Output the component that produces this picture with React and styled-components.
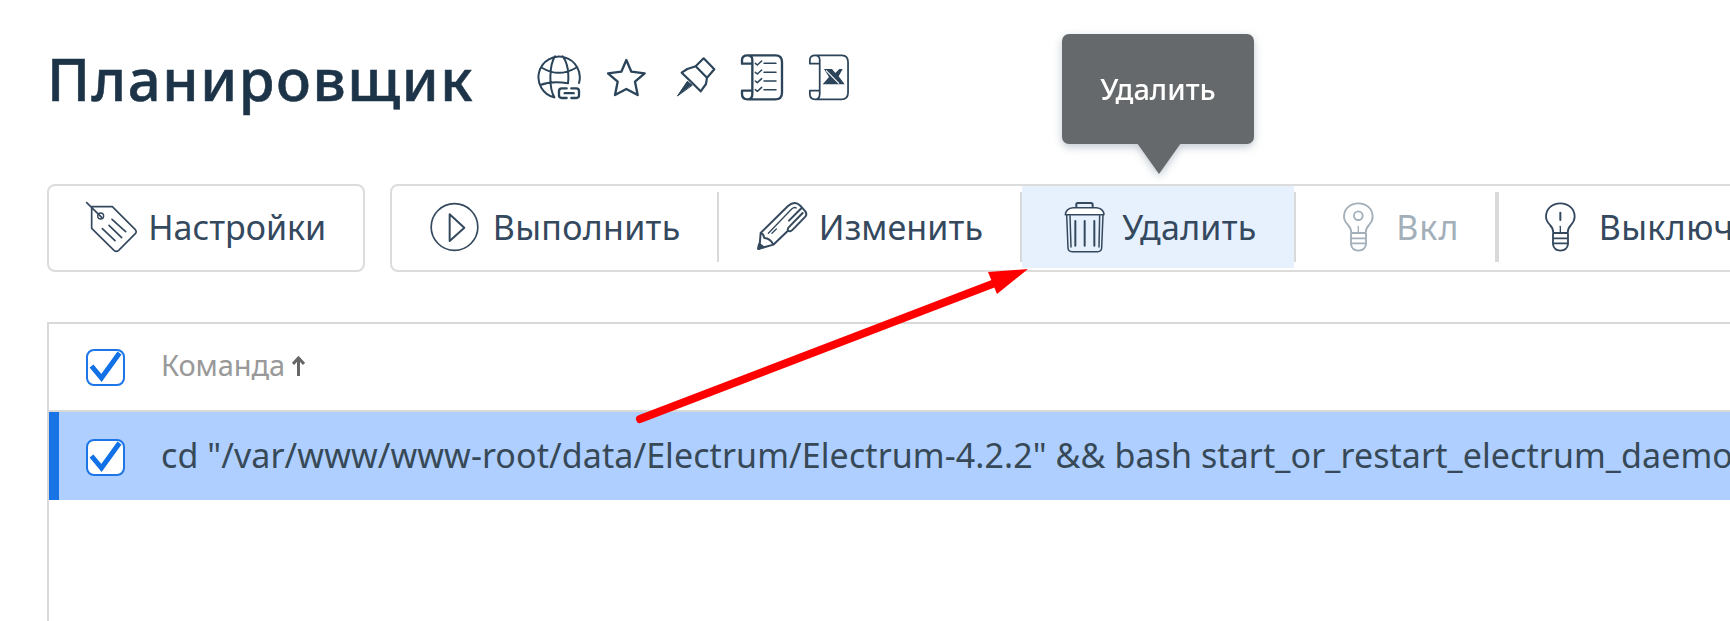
import React from "react";
import styled, { createGlobalStyle } from "styled-components";

const GlobalStyle = createGlobalStyle`
  * { box-sizing: border-box; }
  html, body { margin: 0; padding: 0; overflow: hidden; background: #fff; }
  body { font-family: "Noto Sans", "Open Sans", sans-serif; color: #34495e; }
  svg { display: block; flex: none; }
`;

const Page = styled.main`
  position: relative;
  display: flex;
  flex-direction: column;
  width: 1730px;
  height: 621px;
  padding-left: 47px;
  overflow: hidden;
  background: #fff;
`;

const Header = styled.header`
  display: flex;
  flex: none;
  align-items: flex-start;
  height: 184px;
  padding-top: 54px;
`;

const Title = styled.h1`
  width: 490.3px;
  margin: -15px 0 0;
  font-size: 58px;
  line-height: 80px;
  font-weight: 500;
  letter-spacing: 1.55px;
  -webkit-text-stroke: 0.6px #1d3448;
  white-space: nowrap;
  color: #1d3448;
`;

const HeaderIcons = styled.nav`
  display: grid;
  grid-template-columns: 69.4px 69.3px 64px 68px 42px;
  color: #2b4459;
`;

const Toolbar = styled.div`
  display: flex;
  gap: 25px;
  height: 88px;
  flex: none;
`;

const ButtonGroup = styled.div`
  display: flex;
  flex: none;
  align-items: flex-start;
  width: ${(p) => p.$width}px;
  height: 88px;
  border: 2px solid #dcdcdc;
  border-radius: 8px;
`;

const Button = styled.button`
  display: flex;
  flex: none;
  align-items: center;
  gap: ${(p) => p.$gap}px;
  width: ${(p) => p.$width}px;
  height: 82px;
  padding: 0 0 0 ${(p) => p.$pad}px;
  border: 0;
  background: ${(p) => (p.$active ? "#e7f1fe" : "transparent")};
  color: ${(p) => (p.$disabled ? "#a3afb9" : "#34495e")};
`;

const Label = styled.span`
  font: 400 34px/44px "Noto Sans", "Open Sans", sans-serif;
  letter-spacing: ${(p) => p.$track || 0}px;
  white-space: nowrap;
`;

const Separator = styled.span`
  flex: none;
  width: ${(p) => p.$width || 2}px;
  height: 70px;
  margin-top: 6px;
  background: #d9d9d9;
`;

const Table = styled.section`
  flex: none;
  width: 1700px;
  height: 320px;
  margin-top: 50px;
  border: 2px solid #d9d9d9;
  border-width: 2px 0 0 2px;
`;

const HeadRow = styled.div`
  display: flex;
  align-items: center;
  height: 88px;
  padding: 0 0 2px 37px;
  border-bottom: 2px solid #d9d9d9;
`;

const HeadCell = styled.span`
  margin: -3px 7px 0 36px;
  font-size: 29px;
  line-height: 40px;
  letter-spacing: -0.1px;
  color: #999;
`;

const Row = styled.div`
  display: flex;
  align-items: center;
  height: 88px;
  padding-left: 27px;
  border-left: 10px solid #1873e4;
  background: #aecfff;
`;

const Command = styled.span`
  margin: -2px 0 0 36px;
  font-size: 34px;
  line-height: 46px;
  letter-spacing: 0.08px;
  white-space: pre;
  color: #374957;
`;

const Checkbox = styled.span`
  display: block;
  flex: none;
  width: 39px;
  height: 37px;
  margin-top: 3px;
  border: 2px solid #1c76e8;
  border-radius: 8px;
  background: #fff;
`;

const Tooltip = styled.div`
  position: absolute;
  left: 1062px;
  top: 34px;
  display: flex;
  align-items: center;
  justify-content: center;
  width: 192px;
  height: 110px;
  padding-bottom: 2px;
  border-radius: 7px;
  background: #65696b;
  color: #fff;
  font-size: 29px;
  font-weight: 500;
  filter: drop-shadow(0 3px 4px rgba(50, 75, 105, 0.3));
  &::after {
    content: "";
    position: absolute;
    left: 75px;
    top: 109px;
    border: solid transparent;
    border-width: 31px 22px 0;
    border-top-color: #65696b;
  }
`;

const Pointer = styled.svg`
  position: absolute;
  left: 0;
  top: 0;
  pointer-events: none;
`;

function Icon({ box, stroke = 5, children }) {
  const [, , w, h] = box.split(" ").map(Number);
  return (
    <svg width={w / 3} height={h / 3} viewBox={box} fill="none" stroke="currentColor"
      strokeWidth={stroke} strokeLinecap="round" strokeLinejoin="round">
      {children}
    </svg>
  );
}

const GlobeIcon = () => (
  <Icon box="52 42 132 141" stroke={6}>
    <path d="M178 129A62 62 0 1 0 103 172M106 49C90 72 86 140 104 172M129 49C145 68 148 104 145 130M68 84Q117 113 168 84M62 135Q95 122 145 130" />
    <path strokeWidth="7" d="M141 145H126Q118 145 118 153V166Q118 174 126 174H141M155 145H170Q178 145 178 153V166Q178 174 170 174H155M135 159.500H162" />
  </Icon>
);

const StarIcon = () => (
  <Icon box="260 42 117 141" stroke={7}>
    <path d="M318 60L333 95L373 100L344 125L352 165L318 147L284 165L292 125L263 100L303 95Z" />
  </Icon>
);

const PinIcon = () => (
  <Icon box="468 42 120 141" stroke={6.5}>
    <path d="M551 55L583 88L561 113L558 132L542 154L514 126L485 98L502 87L527 79ZM527 79L561 113" />
    <path fill="currentColor" strokeWidth="3" d="M473 167L502 124L516 135Z" />
  </Icon>
);

const scroll = "M683 46H767Q786 46 786 67V158Q786 178 765 178H683Q666 178 666 162V152H697V162Q697 178 683 178M697 152V70M683 46Q666 46 666 60V71H697V60Q697 46 683 46";

const TaskListIcon = () => (
  <Icon box="660 42 132 141" stroke={7}>
    <path d={scroll} />
    {[70, 97, 123, 149].map((y) => (
      <path key={y} strokeWidth="4.500" d={`M706 ${y}l6 5l13 -12M732 ${y}H768`} />
    ))}
  </Icon>
);

const ExcelIcon = () => (
  <Icon box="864 42 126 141" stroke={5.5}>
    <path transform="translate(233.500 0) scale(.955 1)" d={scroll} />
    <path fill="currentColor" stroke="none" d="M912 87H936L946 99L958 87H968L956 109L974 133H908L927 111Z" />
    <path stroke="#fff" strokeWidth="3.500" strokeLinecap="butt" d="M918 91L957 131" />
  </Icon>
);

const TagIcon = () => (
  <Icon box="134 92 160 158">
    <path d="M154 109H216L285 178Q290 184 285 190L235 240Q228 246 221 240L154 174ZM139 97L184 141" />
    <circle cx="181" cy="137" r="9" strokeWidth="4" />
    <path d="M215 147L256 184M206 165L244 202M186 175L224 211" />
  </Icon>
);

const PlayIcon = () => (
  <Icon box="144 92 160 158">
    <circle cx="223.500" cy="170" r="70" />
    <path strokeWidth="6" d="M209 132L253 172L209 212Z" />
  </Icon>
);

const PencilIcon = () => (
  <Icon box="134 92 160 158">
    <path strokeWidth="6" d="M151 188L233 107Q253 90 270 106L285 123Q291 132 285 139L248 177Q238 187 233 180Q230 174 240 166L277 128M232 182L189 223L147 235L151 188Q158 188 162 203Q180 204 189 223M273 114L236 151" />
    <path strokeWidth="8" d="M144 235L147 222L158 230Z" />
    <path strokeWidth="4" d="M174 189L244 116Q252 109 258 113M185 189L198 176" />
  </Icon>
);

const TrashIcon = () => (
  <Icon box="160 542 130 158" stroke={4.5}>
    <path strokeWidth="6" d="M200 562V552Q200 548 205 548H244Q249 548 249 553V562" />
    <path fill="#fff" d="M190 562H260Q282 564 283 583H167Q169 564 190 562Z" />
    <path d="M171 584L175 683Q176 694 187 694H264Q275 694 276 683L280 584M181 586L184 680M270 586L268 680" />
    <path strokeWidth="6" d="M197 602V676M225 602V676M254 602V676" />
  </Icon>
);

const BulbIcon = ({ on }) => (
  <Icon box="156 92 98 158" stroke={5.5}>
    <path d="M184 188Q184 174 174 164Q162 151 162 139C162 116 180 99 205 99S248 116 248 139Q248 151 237 164Q227 174 227 188ZM183 190V222Q186 240 205 241Q225 240 228 222V190M184 204H227M184 219H227" />
    <path strokeWidth="4" d="M205 168V188" />
    {on ? <circle cx="205" cy="136" r="13" /> : <path strokeWidth="6" d="M205 127V149" />}
  </Icon>
);

const Check = () => (
  <Checkbox>
    <svg width="35" height="33" viewBox="0 0 35 33" fill="none" stroke="#1271e6" strokeWidth="5">
      <path d="M3.500 15L13.500 27L31.500 2" />
    </svg>
  </Checkbox>
);

export default function App() {
  return (
    <Page>
      <GlobalStyle />
      <Header>
        <Title>Планировщик</Title>
        <HeaderIcons>
          <GlobeIcon />
          <StarIcon />
          <PinIcon />
          <TaskListIcon />
          <ExcelIcon />
        </HeaderIcons>
      </Header>

      <Toolbar>
        <ButtonGroup $width={318}>
          <Button $width={314} $pad={36} $gap={10}>
            <TagIcon />
            <Label>Настройки</Label>
          </Button>
        </ButtonGroup>
        <ButtonGroup $width={1500}>
          <Button $width={325} $pad={36} $gap={11.5}>
            <PlayIcon />
            <Label $track={0.3}>Выполнить</Label>
          </Button>
          <Separator />
          <Button $width={301} $pad={36} $gap={10.5}>
            <PencilIcon />
            <Label $track={0.1}>Изменить</Label>
          </Button>
          <Separator />
          <Button $width={272} $pad={41} $gap={16} $active>
            <TrashIcon />
            <Label $track={0.25}>Удалить</Label>
          </Button>
          <Separator />
          <Button $width={199} $pad={46} $gap={21.5} $disabled>
            <BulbIcon on />
            <Label $track={1.1}>Вкл</Label>
          </Button>
          <Separator $width={4} />
          <Button $width={300} $pad={45} $gap={22}>
            <BulbIcon />
            <Label $track={0.4}>Выключить</Label>
          </Button>
        </ButtonGroup>
      </Toolbar>

      <Table>
        <HeadRow>
          <Check />
          <HeadCell>Команда</HeadCell>
          <svg width="13" height="20" viewBox="0 0 13 20" fill="none" stroke="#666" strokeWidth="3">
            <path d="M6.500 20V2M1 8L6.500 2L12 8" />
          </svg>
        </HeadRow>
        <Row>
          <Check />
          <Command>{'cd "/var/www/www-root/data/Electrum/Electrum-4.2.2" && bash start_or_restart_electrum_daemon.sh'}</Command>
        </Row>
      </Table>

      <Tooltip>Удалить</Tooltip>
      <Pointer width="1730" height="621" viewBox="0 0 1730 621">
        <path d="M640 419L995 283" stroke="#f00" strokeWidth="8" strokeLinecap="round" />
        <path d="M1028 269L988 272L997 294Z" fill="#f00" />
      </Pointer>
    </Page>
  );
}
